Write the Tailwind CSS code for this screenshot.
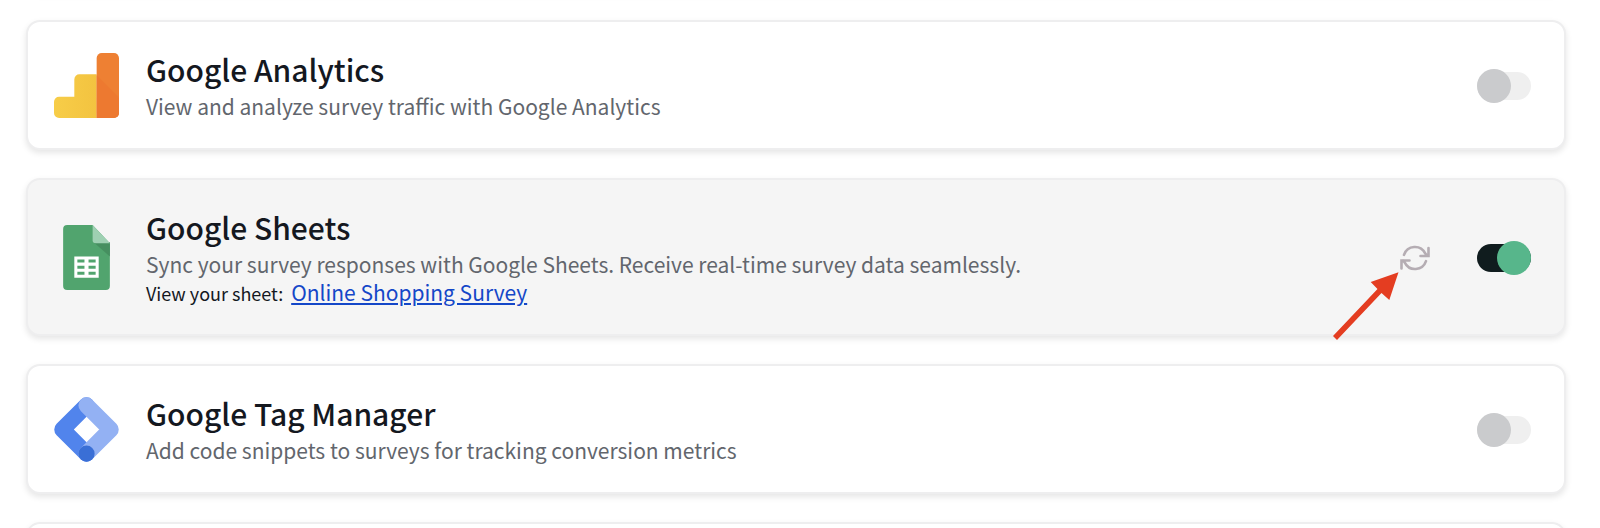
<!DOCTYPE html>
<html lang="en">

<head>
    <meta charset="UTF-8">
    <meta name="viewport" content="width=device-width, initial-scale=1.0">
    <title>Integrations</title>
    <script src="https://cdn.jsdelivr.net/npm/@tailwindcss/browser@4"></script>
</head>

<body class="bg-white h-screen overflow-hidden font-['Noto_Sans_CJK_SC',sans-serif] text-[#14181f]">

    <main class="flex flex-col gap-7 pl-[26px] pr-[34px] -mt-[138px]">

        <section class="h-[130px] shrink-0 rounded-[14px] border-2 border-[#eeeeef] shadow-[0_3px_6px_rgba(0,0,0,0.1)]"></section>

        <!-- Google Analytics -->
        <section class="flex items-center rounded-[14px] border-2 border-[#eeeeef] bg-white pt-[29px] pb-7 pl-[26px] pr-[33px] shadow-[0_3px_6px_rgba(0,0,0,0.1)]">
            <svg class="size-[65px] shrink-0" viewBox="0 0 64 64">
                <defs>
                    <linearGradient id="bars" x1="0" x2="1">
                        <stop offset="0" stop-color="#f7cd48" />
                        <stop offset="1" stop-color="#f3c340" />
                    </linearGradient>
                </defs>
                <path fill="url(#bars)" d="M42 21H25a5 5 0 0 0-5 5v17H5a5 5 0 0 0-5 5v11a5 5 0 0 0 5 5h37z" />
                <path fill="#ee8033" d="M42 5a5 5 0 0 1 5-5h12a5 5 0 0 1 5 5v54a5 5 0 0 1-5 5H42z" />
                <path fill="#ed7930" d="M42 22l22 22v15a5 5 0 0 1-5 5H42z" />
            </svg>
            <div class="ml-[27px] grow">
                <h2 class="mb-[5px] text-[30px] leading-9 font-medium">Google Analytics</h2>
                <p class="text-[21px] leading-7 text-[#62666d]">View and analyze survey traffic with Google Analytics</p>
            </div>
            <input type="checkbox" role="switch" aria-label="Google Analytics"
                class="relative h-[34px] w-[54px] shrink-0 cursor-pointer appearance-none before:absolute before:inset-x-0 before:top-[3px] before:h-7 before:rounded-full before:bg-[#efefef] after:absolute after:left-0 after:top-0 after:size-[34px] after:rounded-full after:bg-[#cacbcd] checked:before:bg-[#101c1e] checked:after:left-5 checked:after:bg-[#57b68b]">
        </section>

        <!-- Google Sheets -->
        <section class="relative flex items-center rounded-[14px] border-2 border-[#eeeeef] bg-[#f5f5f5] pt-[29px] pb-7 pl-[26px] pr-[33px] shadow-[0_3px_6px_rgba(0,0,0,0.1)]">
            <svg class="size-[65px] shrink-0" viewBox="0 0 64 64">
                <path fill="#51a46e" d="M12 0h26l17 18v42a4 4 0 0 1-4 4H13a4 4 0 0 1-4-4V4a4 4 0 0 1 4-4z" />
                <path fill="#468f60" d="M39 17l16 14V17z" />
                <path fill="#9ed0b2" d="M38 0l17 18H41a3 3 0 0 1-3-3z" />
                <path fill="#fff" fill-rule="evenodd" d="M20 31h24v21H20zM23 34v3h7v-3zm11 0v3h7v-3zM23 40v3h7v-3zm11 0v3h7v-3zM23 46v3h7v-3zm11 0v3h7v-3z" />
            </svg>
            <div class="ml-[27px] grow">
                <h2 class="mb-[5px] text-[30px] leading-9 font-medium">Google Sheets</h2>
                <p class="text-[21px] leading-7 text-[#62666d]">Sync your survey responses with Google Sheets. Receive real-time survey data seamlessly.</p>
                <div class="flex h-7 items-baseline gap-2 text-[18px] leading-7">
                    <span>View your sheet:</span>
                    <a href="#" class="text-[21px] leading-7 text-[#1447c8] underline">Online Shopping Survey</a>
                </div>
            </div>
            <button type="button" aria-label="Sync now" class="mr-[46px] shrink-0 cursor-pointer">
                <svg class="h-[26px] w-8" viewBox="0 0 32 26" fill="none" stroke="#b5adb3" stroke-width="2.6" stroke-linecap="round">
                    <path d="M5 9.800A11.500 11.500 0 0 1 26.200 8.400L28 10.500M29.500 3v8H21.500" />
                    <path d="M27 16.200A11.500 11.500 0 0 1 5.800 17.600L4 15.500M2.500 23.500v-8H10.500" />
                </svg>
            </button>
            <input type="checkbox" role="switch" aria-label="Google Sheets" checked
                class="relative h-[34px] w-[54px] shrink-0 cursor-pointer appearance-none before:absolute before:inset-x-0 before:top-[3px] before:h-7 before:rounded-full before:bg-[#efefef] after:absolute after:left-0 after:top-0 after:size-[34px] after:rounded-full after:bg-[#cacbcd] checked:before:bg-[#101c1e] checked:after:left-5 checked:after:bg-[#57b68b]">

            <!-- arrow pointing at the sync button -->
            <svg class="pointer-events-none absolute -bottom-1.5 right-[164px] h-[70px] w-[68px]" viewBox="0 0 68 70">
                <path fill="#e43d21" d="M66.500 2.300L38.700 12l6.800 7L1 66l4 4 44.500-47 7.800 7z" />
            </svg>
        </section>

        <!-- Google Tag Manager -->
        <section class="flex items-center rounded-[14px] border-2 border-[#eeeeef] bg-white pt-[29px] pb-7 pl-[26px] pr-[33px] shadow-[0_3px_6px_rgba(0,0,0,0.1)]">
            <svg class="size-[65px] shrink-0" viewBox="-33 -33 66 66" fill="none" stroke-width="16.500" stroke-linejoin="round" stroke-linecap="round">
                <path stroke="#5184ec" d="M0-24.500L-24.500 0L0 24.500" />
                <path stroke="#93b1f3" d="M0-24.500L24.500 0L0 24.500" />
                <circle fill="#3a6fd6" cy="24.500" r="8.250" />
            </svg>
            <div class="ml-[27px] grow">
                <h2 class="mb-[5px] text-[30px] leading-9 font-medium">Google Tag Manager</h2>
                <p class="text-[21px] leading-7 text-[#62666d]">Add code snippets to surveys for tracking conversion metrics</p>
            </div>
            <input type="checkbox" role="switch" aria-label="Google Tag Manager"
                class="relative h-[34px] w-[54px] shrink-0 cursor-pointer appearance-none before:absolute before:inset-x-0 before:top-[3px] before:h-7 before:rounded-full before:bg-[#efefef] after:absolute after:left-0 after:top-0 after:size-[34px] after:rounded-full after:bg-[#cacbcd] checked:before:bg-[#101c1e] checked:after:left-5 checked:after:bg-[#57b68b]">
        </section>

        <section class="h-[130px] shrink-0 rounded-[14px] border-2 border-[#eeeeef] shadow-[0_3px_6px_rgba(0,0,0,0.1)]"></section>

    </main>

</body>

</html>
